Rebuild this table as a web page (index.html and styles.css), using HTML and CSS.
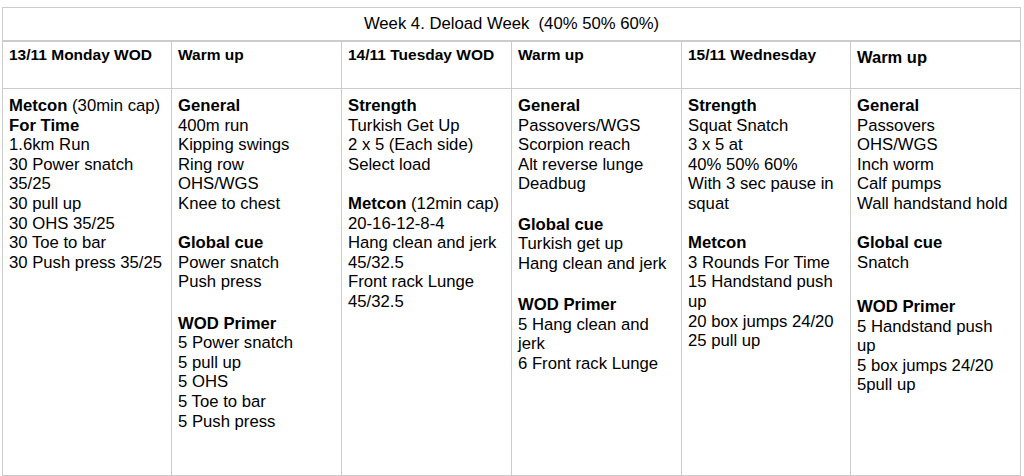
FILE: index.html
```html
<!DOCTYPE html>
<html>
<head>
<meta charset="utf-8">
<link rel="stylesheet" href="styles.css">
</head>
<body>
<table class="plan">
  <colgroup>
    <col class="c1"><col class="c2"><col class="c3"><col class="c4"><col class="c5"><col class="c6">
  </colgroup>
  <tr class="title-row">
    <th colspan="6" class="title">Week 4. Deload Week&nbsp; (40% 50% 60%)</th>
  </tr>
  <tr class="head-row">
    <th>13/11 Monday WOD</th>
    <th>Warm up</th>
    <th>14/11 Tuesday WOD</th>
    <th>Warm up</th>
    <th>15/11 Wednesday</th>
    <th class="head-lg">Warm up</th>
  </tr>
  <tr class="body-row">
    <td>
      <div class="sec"><b>Metcon</b> (30min cap)<br><b>For Time</b><br>1.6km Run<br>30 Power snatch 35/25<br>30 pull up<br>30 OHS 35/25<br>30 Toe to bar<br>30 Push press 35/25</div>
    </td>
    <td>
      <div class="sec"><b>General</b><br>400m run<br>Kipping swings<br>Ring row<br>OHS/WGS<br>Knee to chest</div>
      <div class="sec"><b>Global cue</b><br>Power snatch<br>Push press</div>
      <div class="sec gap-2"><b>WOD Primer</b><br>5 Power snatch<br>5 pull up<br>5 OHS<br>5 Toe to bar<br>5 Push press</div>
    </td>
    <td>
      <div class="sec"><b>Strength</b><br>Turkish Get Up<br>2 x 5 (Each side)<br>Select load</div>
      <div class="sec"><b>Metcon</b> (12min cap)<br>20-16-12-8-4<br>Hang clean and jerk<br>45/32.5<br>Front rack Lunge<br>45/32.5</div>
    </td>
    <td>
      <div class="sec"><b>General</b><br>Passovers/WGS<br>Scorpion reach<br>Alt reverse lunge<br>Deadbug</div>
      <div class="sec gap-1"><b>Global cue</b><br>Turkish get up<br>Hang clean and jerk</div>
      <div class="sec gap-2"><b>WOD Primer</b><br>5 Hang clean and jerk<br>6 Front rack Lunge</div>
    </td>
    <td>
      <div class="sec"><b>Strength</b><br>Squat Snatch<br>3 x 5 at<br>40% 50% 60%<br>With 3 sec pause in squat</div>
      <div class="sec"><b>Metcon</b><br>3 Rounds For Time<br>15 Handstand push up<br>20 box jumps 24/20<br>25 pull up</div>
    </td>
    <td>
      <div class="sec"><b>General</b><br>Passovers<br>OHS/WGS<br>Inch worm<br>Calf pumps<br>Wall handstand hold</div>
      <div class="sec"><b>Global cue</b><br>Snatch</div>
      <div class="sec gap-5"><b>WOD Primer</b><br>5 Handstand push up<br>5 box jumps 24/20<br>5pull up</div>
    </td>
  </tr>
</table>
</body>
</html>
```

FILE: styles.css
```css
html, body {
  margin: 0;
  padding: 0;
  background: #ffffff;
}

body {
  font-family: "Liberation Sans", Arial, sans-serif;
  color: #000000;
  overflow: hidden;
}

.plan {
  margin: 7px 0 0 2px;
  width: 1019px;
  border-collapse: collapse;
  table-layout: fixed;
}

.plan th,
.plan td {
  border: 1px solid #cbcbcb;
  vertical-align: top;
  text-align: left;
  padding: 0 6px;
}

.c1 { width: 169px; }
.c2 { width: 170px; }
.c3 { width: 170px; }
.c4 { width: 170px; }
.c5 { width: 169px; }
.c6 { width: 170px; }

.title-row {
  height: 33px;
}

.plan .title {
  text-align: center;
  vertical-align: middle;
  font-weight: normal;
  font-size: 16.7px;
  line-height: 20px;
  padding: 0;
  border-bottom: 2px solid #cbcbcb;
}

.head-row {
  height: 48px;
}

.head-row th {
  font-size: 15.5px;
  font-weight: bold;
  line-height: 19.6px;
  padding-top: 3px;
}

.head-row .head-lg {
  font-size: 16.5px;
  padding-top: 6px;
}

.body-row {
  height: 387px;
}

.body-row td {
  font-size: 16.7px;
  line-height: 19.6px;
  padding-top: 7px;
}

.sec + .sec {
  margin-top: 19.6px;
}

.sec.gap-1 { margin-top: 20.6px; }
.sec.gap-2 { margin-top: 21.6px; }
.sec.gap-5 { margin-top: 24.6px; }
```
